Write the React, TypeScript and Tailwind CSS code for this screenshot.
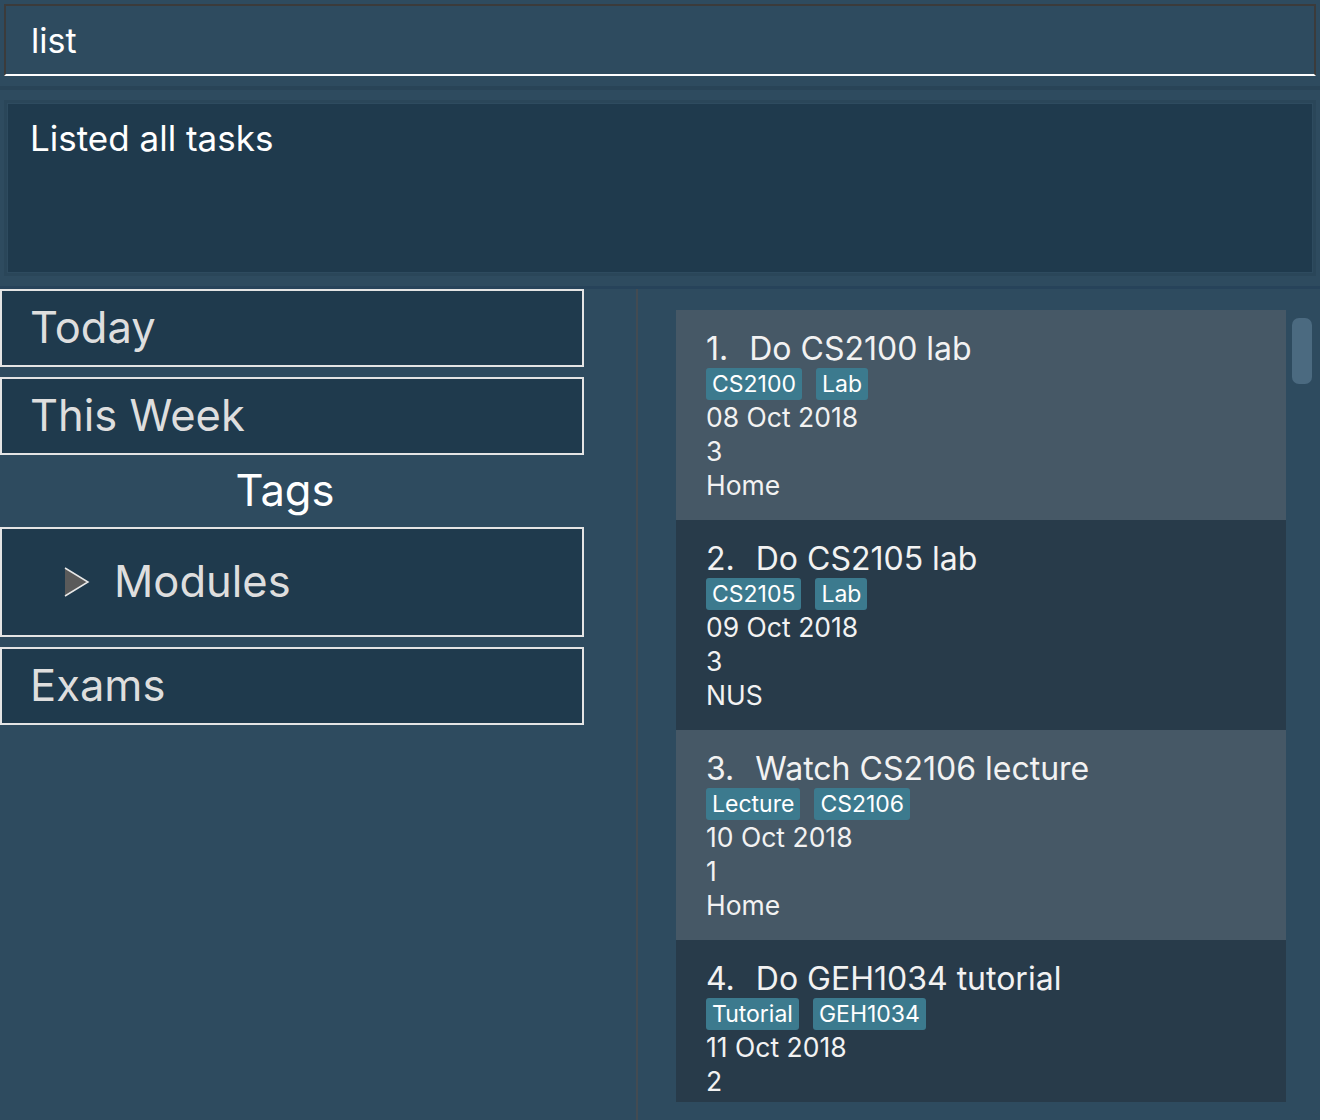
import React from 'react'

type Task = { n: number; title: string; tags: string[]; date: string; priority: string; place?: string }

const tasks: Task[] = [
  { n: 1, title: 'Do CS2100 lab', tags: ['CS2100', 'Lab'], date: '08 Oct 2018', priority: '3', place: 'Home' },
  { n: 2, title: 'Do CS2105 lab', tags: ['CS2105', 'Lab'], date: '09 Oct 2018', priority: '3', place: 'NUS' },
  { n: 3, title: 'Watch CS2106 lecture', tags: ['Lecture', 'CS2106'], date: '10 Oct 2018', priority: '1', place: 'Home' },
  // last card is cut off by the list viewport, its place line is never visible
  { n: 4, title: 'Do GEH1034 tutorial', tags: ['Tutorial', 'GEH1034'], date: '11 Oct 2018', priority: '2' },
]

function TaskCard({ task }: { task: Task }) {
  const odd = task.n % 2 === 1
  return (
    <div className={`h-[210px] shrink-0 pl-[30px] pt-[19px] text-[#f2f2f2] ${odd ? 'bg-[#465866]' : 'bg-[#283b4a]'}`}>
      <div className="h-[39px] text-[32px] leading-[39px] whitespace-nowrap flex gap-[21px]">
        <span>{task.n}.</span>
        <span>{task.title}</span>
      </div>
      <div className="flex gap-[14px] h-[32px]">
        {task.tags.map(tag => (
          <span key={tag} className="h-[32px] px-[6px] rounded-[3px] bg-[#3c7a8e] text-[23px] leading-[32px] text-white">
            {tag}
          </span>
        ))}
      </div>
      <div className="text-[26.5px] leading-[34px]">{task.date}</div>
      <div className="text-[26.5px] leading-[34px]">{task.priority}</div>
      {task.place && <div className="text-[26.5px] leading-[34px]">{task.place}</div>}
    </div>
  )
}

function SideBox({ children, className = '' }: { children: React.ReactNode; className?: string }) {
  return (
    <div className={`w-[584px] border-2 border-[#e4e4e4] bg-[#1f3a4d] flex items-center text-[#dedede] text-[43.5px] ${className}`}>
      {children}
    </div>
  )
}

export default function App() {
  return (
    <div
      className="w-[1320px] h-[1120px] overflow-hidden bg-[#2e4b5f] flex flex-col"
      style={{ fontFamily: 'Inter, "Noto Sans", sans-serif' }}
    >
      {/* command box */}
      <div className="mx-[4px] mt-[4px] h-[72px] border-2 border-[#3b3b3b] border-b-white bg-[#2e4b5f] flex items-center pl-[25px] text-white text-[34px]">
        list
      </div>

      {/* result display */}
      <div className="mt-[10px] border-t-4 border-[#294457] pt-[10px] pb-[10px] px-[4px]">
        <div className="h-[176px] border-[3px] border-[#2a4659] bg-[#2e4b5f] p-[1px]">
          <div className="h-full bg-[#1f3a4d] pl-[22px] pt-[8px] text-white text-[35px]">Listed all tasks</div>
        </div>
      </div>

      {/* split */}
      <div className="border-t-[3px] border-[#27435a] flex flex-1 min-h-0">
        <div className="w-[638px] shrink-0 border-r-2 border-[#434b52] flex flex-col">
          <SideBox className="h-[78px] pl-[28px]">Today</SideBox>
          <SideBox className="h-[78px] pl-[28px] mt-[10px]">This Week</SideBox>
          <div className="w-[570px] h-[72px] flex items-center justify-center text-white text-[43.5px]">Tags</div>
          <SideBox className="h-[110px] pl-[62px]">
            <svg width="26" height="30" viewBox="0 0 26 30" className="mr-[24px]">
              <path d="M1 1 L24 15 L1 29 Z" fill="#5a5a5a" />
              <path d="M1 1 L24 15 L1 29" fill="none" stroke="#e8e8e8" strokeWidth="1.5" />
            </svg>
            Modules
          </SideBox>
          <SideBox className="h-[78px] pl-[28px] mt-[10px]">Exams</SideBox>
        </div>
        <div className="flex-1 flex pl-[38px] pt-[21px] pb-[18px]">
          <div className="w-[610px] flex flex-col overflow-hidden">
            {tasks.map(t => (
              <TaskCard key={t.n} task={t} />
            ))}
          </div>
          <div className="ml-[6px] pt-[8px]">
            <div className="w-[20px] h-[66px] rounded-[7px] bg-[#4b6a80]" />
          </div>
        </div>
      </div>
    </div>
  )
}
